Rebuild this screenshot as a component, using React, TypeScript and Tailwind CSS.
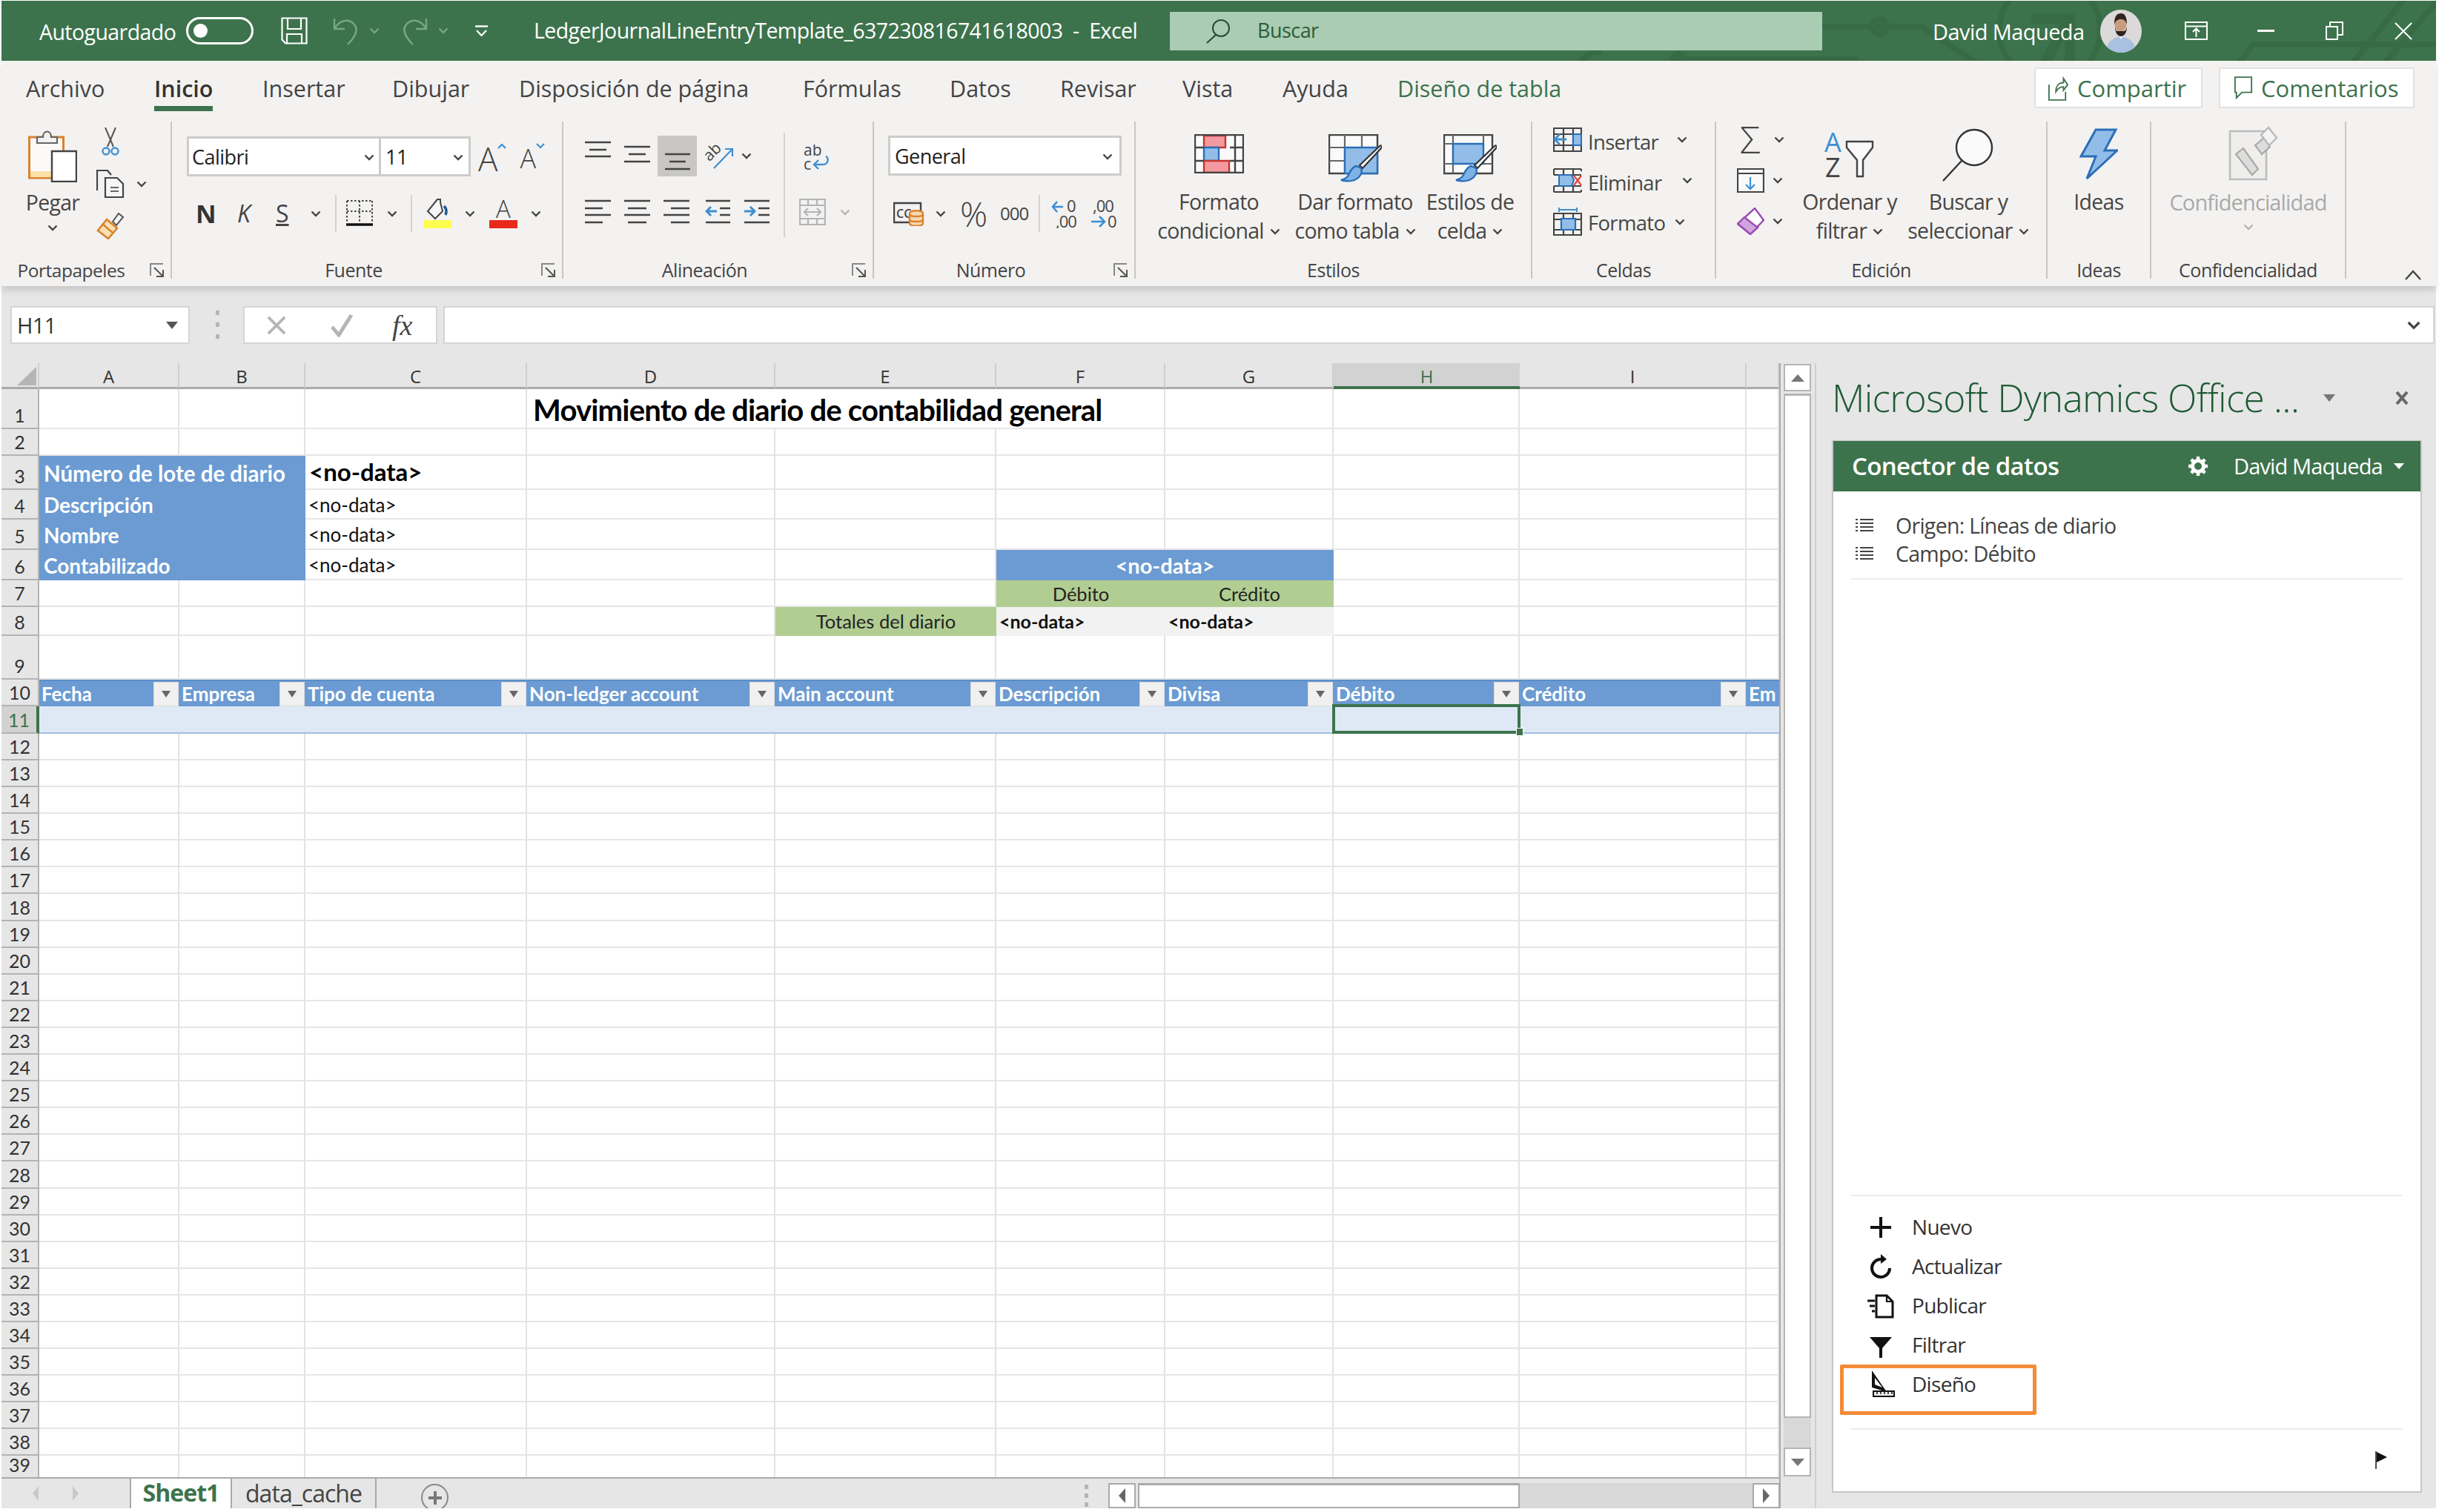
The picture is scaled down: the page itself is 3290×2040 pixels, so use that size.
import React from "react";

const Chev = ({ c = "#444", cls = "" }: { c?: string; cls?: string }) => (
  <svg viewBox="0 0 14 9" className={"w-[14px] h-[9px] shrink-0 " + cls}>
    <path d="M1.5 1.5 7 7l5.5-5.5" fill="none" stroke={c} strokeWidth="2.4" />
  </svg>
);
const Sep = ({ cls }: { cls: string }) => <div className={"w-[2px] bg-[#d4d3d2] shrink-0 " + cls} />;

/* ---------- title bar ---------- */
function TitleBar() {
  return (
    <div className="relative h-[81px] bg-[#3d734c] flex items-center pl-[51px] text-white overflow-hidden shrink-0">
      <svg viewBox="0 0 3284 81" className="absolute inset-0 w-full h-full">
        <g fill="none" stroke="#376b46" strokeWidth="8">
          <path d="M2455 35h80m0 0h55l76 50" />
          <circle cx="2533" cy="35" r="10" />
          <circle cx="2763" cy="40" r="68" />
          <path d="M2738 24h52v62M2790 24l-34 60" strokeWidth="14" />
          <path d="M3017 85l20-26h250M3243-5l-72 90M3290-5l-76 90" />
          <path d="M2250 79h255" />
          <circle cx="2262" cy="80" r="8" />
          <path d="M2130 85c5-14 18-16 28-16" />
        </g>
      </svg>
      <div className="relative flex items-center">
        <span className="w-[198px] text-[28.5px] tracking-[-0.02em] whitespace-nowrap mt-[3px]">Autoguardado</span>
        <div className="w-[91px] h-[37px] border-[3px] border-white rounded-full flex items-center pl-[7px]">
          <div className="w-[19px] h-[19px] rounded-full bg-white" />
        </div>
        <svg viewBox="0 0 36 37" className="w-[36px] h-[37px] ml-[37px]">
          <path d="M1.5 1.5h33v34H6l-4.500-5z" fill="none" stroke="#fff" strokeWidth="2.2" />
          <path d="M9 2v14h18V2M8 35V23h20v12" fill="none" stroke="#fff" strokeWidth="2.2" />
        </svg>
        <svg viewBox="0 0 35 40" className="w-[35px] h-[40px] ml-[34px]">
          <path d="M2 3v14h14M2 17C8 6 20 2 28 10c8 8 2 18-8 28" fill="none" stroke="#78a586" strokeWidth="2.4" />
        </svg>
        <Chev c="#78a586" cls="ml-[14px]" />
        <svg viewBox="0 0 37 40" className="w-[37px] h-[40px] ml-[29px]">
          <path d="M34 3v14H20M34 17C28 6 16 2 8 10c-8 8-2 18 8 28" fill="none" stroke="#78a586" strokeWidth="2.4" />
        </svg>
        <Chev c="#78a586" cls="ml-[13px]" />
        <svg viewBox="0 0 17 15" className="w-[17px] h-[15px] ml-[36px]">
          <path d="M0 1.500h17" stroke="#fff" strokeWidth="2.4" />
          <path d="M2 7l6.500 7L15 7" fill="none" stroke="#fff" strokeWidth="2.2" />
        </svg>
        <span className="w-[858px] ml-[62px] text-[28.5px] tracking-[-0.02em] whitespace-pre">LedgerJournalLineEntryTemplate_637230816741618003  -  Excel</span>
        <div className="w-[880px] h-[52px] bg-[#a9ccb3] flex items-center pl-[48px]">
          <svg viewBox="0 0 34 34" className="w-[34px] h-[34px]">
            <circle cx="21" cy="13" r="11" fill="none" stroke="#264d33" strokeWidth="2" />
            <path d="M14 22 2 33" stroke="#264d33" strokeWidth="2.2" />
          </svg>
          <span className="ml-[36px] text-[27px] tracking-[-0.02em] text-[#2b5c3a]">Buscar</span>
        </div>
        <span className="w-[226px] ml-[149px] text-[29px] tracking-[-0.02em] whitespace-nowrap mt-[3px]">David Maqueda</span>
        <svg viewBox="0 0 56 58" className="w-[56px] h-[58px]">
          <defs>
            <clipPath id="av"><ellipse cx="28" cy="29" rx="28" ry="29" /></clipPath>
          </defs>
          <g clipPath="url(#av)">
            <rect width="56" height="58" fill="#dcdad8" />
            <path d="M8 58c0-14 8-20 20-22 12 2 20 8 20 22z" fill="#a9c0e0" />
            <path d="M24 34l4 6 4-6z" fill="#eef2f8" />
            <ellipse cx="27.500" cy="20" rx="8" ry="10" fill="#c99c80" />
            <path d="M19 20c0-12 4-15 9-15s8 4 8 15c-2-5-3-7-8-7s-7 2-9 7zM20 23c1 5 2 6 3 6h9c1 0 3-1 4-6 0 7-3 13-8 13s-8-6-8-13z" fill="#2f241f" />
          </g>
        </svg>
        <svg viewBox="0 0 31 25" className="w-[31px] h-[25px] ml-[58px]">
          <path d="M1 1h29v23H1zM1 6.500h29M15.500 21V10M11 14l4.500-4.500L20 14" fill="none" stroke="#fff" strokeWidth="2" />
        </svg>
        <div className="w-[23px] h-[3px] bg-white ml-[67px]" />
        <svg viewBox="0 0 25 25" className="w-[25px] h-[25px] ml-[69px]">
          <path d="M1 7h15v17H1zM6 7V1h17v17h-7" fill="none" stroke="#fff" strokeWidth="2" />
        </svg>
        <svg viewBox="0 0 24 24" className="w-[24px] h-[24px] ml-[68px]">
          <path d="M1 1l22 22M23 1 1 23" stroke="#fff" strokeWidth="2" />
        </svg>
      </div>
    </div>
  );
}

/* ---------- ribbon ---------- */
const TABS: [string, string][] = [
  ["Archivo", "w-[173px]"],
  ["Inicio", "w-[146px]"],
  ["Insertar", "w-[175px]"],
  ["Dibujar", "w-[171px]"],
  ["Disposición de página", "w-[383px]"],
  ["Fórmulas", "w-[198px]"],
  ["Datos", "w-[149px]"],
  ["Revisar", "w-[165px]"],
  ["Vista", "w-[135px]"],
  ["Ayuda", "w-[155px]"],
];

function Tabs() {
  return (
    <div className="flex items-start h-[82px] pl-[33px] pt-[9px] text-[30.5px] text-[#444]">
      {TABS.map(([t, w]) => (
        <div key={t} className={w + " mt-[5px]"}>
          <div className={"h-[54px] leading-[46px] whitespace-nowrap w-fit box-border " + (t === "Inicio" ? "border-b-[7px] border-[#3d734c] font-semibold text-[#333]" : "")}>{t}</div>
        </div>
      ))}
      <div className="mt-[5px] leading-[46px] text-[#3d734c] whitespace-nowrap">Diseño de tabla</div>
      <div className="ml-auto mr-[29px] flex gap-[22px] text-[31px] text-[#3d734c] font-medium">
        <div className="w-[227px] h-[55px] bg-white border-2 border-[#e2e1e0] rounded-[3px] flex items-center pl-[16px] gap-[12px]">
          <svg viewBox="0 0 30 38" className="w-[28px] h-[36px]">
            <path d="M2 14v22h24V24M12 24c0-8 4-13 11-13V5l6 9-6 8v-5c-5 0-8 2-11 7z" fill="none" stroke="#3d734c" strokeWidth="2" />
          </svg>
          <span className="whitespace-nowrap leading-[46px]">Compartir</span>
        </div>
        <div className="w-[264px] h-[55px] bg-white border-2 border-[#e2e1e0] rounded-[3px] flex items-center pl-[18px] gap-[11px]">
          <svg viewBox="0 0 28 36" className="w-[26px] h-[34px]">
            <path d="M2 2h24v22H12l-8 8v-8H2z" fill="none" stroke="#3d734c" strokeWidth="2" />
          </svg>
          <span className="whitespace-nowrap leading-[46px]">Comentarios</span>
        </div>
      </div>
    </div>
  );
}

const Launcher = () => (
  <svg viewBox="0 0 20 20" className="w-[20px] h-[20px] shrink-0 mr-[8px]">
    <path d="M1 17V1h17" fill="none" stroke="#888" strokeWidth="2" />
    <path d="M6 6l11 11M18 9v9H9" fill="none" stroke="#555" strokeWidth="2" />
  </svg>
);

function Group({ w, label, launcher, children, labelCls = "" }: { w: string; label?: string; launcher?: boolean; children: React.ReactNode; labelCls?: string }) {
  return (
    <div className={"flex flex-col h-[212px] shrink-0 border-r-2 border-[#c8c7c6] " + w}>
      <div className="h-[188px] relative">{children}</div>
      <div className="h-[24px] flex items-center pt-[2px] text-[25px] tracking-[-0.02em] text-[#444]">
        <span className={"flex-1 text-center whitespace-nowrap " + labelCls}>{label}</span>
        {launcher && <Launcher />}
      </div>
    </div>
  );
}

function BigBtn({ w, icon, lines, gray, pad = "pt-[17px]" }: { w: string; icon: React.ReactNode; lines: [string, string?]; gray?: boolean; pad?: string }) {
  const col = gray ? "#a9a9a9" : "#444";
  return (
    <div className={"shrink-0 flex flex-col items-center text-[28.5px] leading-[39px] tracking-[-0.025em] whitespace-nowrap " + w + (gray ? " text-[#a9a9a9]" : " text-[#484644]")}>
      <div className={"h-[89px] " + pad}>{icon}</div>
      <div>{lines[0]}</div>
      <div className="flex items-center gap-[8px]">
        {lines[1]}
        {lines[1] !== undefined && <Chev c={col} cls="w-[11px] h-[8px] mt-[2px]" />}
      </div>
    </div>
  );
}

const L = ({ d, x = 36, y = 40 }: { d: string; x?: number; y?: number }) => (
  <svg viewBox={`0 0 ${x} ${y}`} style={{ width: x, height: y }} className="shrink-0">
    <path d={d} fill="none" stroke="#444" strokeWidth="2.4" />
  </svg>
);

const PickBox = ({ w, text, cls }: { w: string; text: string; cls: string }) => (
  <div className={"h-[54px] bg-white border-[3px] border-[#cdcccb] flex items-center justify-between pt-[3px] text-[27px] text-[#222] tracking-[-0.02em] " + w + " " + cls}>
    <span>{text}</span>
    <Chev />
  </div>
);

function Ribbon() {
  return (
    <div className="relative z-10 h-[304px] bg-[#f3f2f1] shadow-[0_5px_9px_rgba(0,0,0,0.14)] shrink-0">
      <Tabs />
      <div className="flex">
        {/* Portapapeles */}
        <Group w="w-[230px]" label="Portapapeles" launcher labelCls="pr-[12px] text-[24.5px]">
          <div className="flex h-full">
            <div className="w-[128px] flex flex-col items-center pt-[9px] pl-[10px] text-[28.5px] leading-[39px] tracking-[-0.025em] text-[#484644]">
              <svg viewBox="0 0 66 73" className="w-[66px] h-[73px] mb-[8px]">
                <path d="M1.500 12h46v55h-46z" fill="#fbfaf8" stroke="#d9822b" strokeWidth="3" />
                <path d="M3 58h30v8H3z" fill="#fbe0a8" />
                <path d="M12 20v-8h8c0-10 11-10 11 0h8v8z" fill="#f3f2f1" stroke="#666" strokeWidth="2.2" />
                <path d="M32 31h33v41H32z" fill="#fff" stroke="#444" strokeWidth="2.4" />
              </svg>
              <span>Pegar</span>
              <Chev cls="mt-[10px]" />
            </div>
            <div className="flex flex-col pt-[8px]">
              <svg viewBox="0 0 24 38" className="w-[24px] h-[38px] ml-[7px]">
                <path d="M5 0l11 26M19 0 8 26" stroke="#555" strokeWidth="2" fill="none" />
                <circle cx="6" cy="32" r="4.500" fill="none" stroke="#3f8fd2" strokeWidth="2.4" />
                <circle cx="18" cy="32" r="4.500" fill="none" stroke="#3f8fd2" strokeWidth="2.4" />
              </svg>
              <div className="flex items-center mt-[19px]">
                <svg viewBox="0 0 38 38" className="w-[38px] h-[38px]">
                  <path d="M1 28V1h14l5 6" fill="none" stroke="#444" strokeWidth="2.2" />
                  <path d="M12 11h16l8 8v18H12z" fill="#f7f7f7" stroke="#444" strokeWidth="2.2" />
                  <path d="M19 24h11M19 29h11" stroke="#666" strokeWidth="2" />
                </svg>
                <Chev cls="ml-[16px]" />
              </div>
              <svg viewBox="0 0 38 36" className="w-[38px] h-[36px] mt-[20px]">
                <path d="M22 12 30 1l6 5-9 11z" fill="#f6f6f6" stroke="#555" strokeWidth="2" />
                <path d="M14 9l14 12-12 14L2 24z" fill="#f8dfb6" stroke="#d9822b" strokeWidth="2.6" />
                <path d="M8 15l14 12" stroke="#d9822b" strokeWidth="2.4" />
              </svg>
            </div>
          </div>
        </Group>
        {/* Fuente */}
        <Group w="w-[528px]" label="Fuente" launcher labelCls="pr-[8px]">
          <div className="pt-[20px] pl-[20px]">
            <div className="flex items-center">
              <PickBox w="w-[262px]" text="Calibri" cls="pl-[4px] pr-[6px]" />
              <PickBox w="w-[121px] border-l-0" text="11" cls="pl-[6px] pr-[7px]" />
              <span className="text-[44px] leading-[60px] h-[54px] text-[#444] ml-[10px] font-light">A</span>
              <svg viewBox="0 0 12 8" className="w-[12px] h-[8px] -mt-[28px]"><path d="M1 7l5-5 5 5" fill="none" stroke="#3f8fd2" strokeWidth="2.2" /></svg>
              <span className="text-[36px] leading-[60px] h-[54px] text-[#444] ml-[18px] font-light">A</span>
              <svg viewBox="0 0 12 8" className="w-[12px] h-[8px] -mt-[28px]"><path d="M1 1l5 5 5-5" fill="none" stroke="#3f8fd2" strokeWidth="2.2" /></svg>
            </div>
            <div className="flex items-center h-[50px] mt-[25px] text-[#444]">
              <span className="w-[56px] pl-[12px] text-[34px] font-bold leading-none text-[#333]">N</span>
              <span className="w-[54px] pl-[12px] text-[32px] italic leading-none">K</span>
              <span className="w-[57px] pl-[10px] text-[32px] underline leading-none">S</span>
              <Chev />
              <Sep cls="h-[50px] ml-[19px]" />
              <svg viewBox="0 0 36 36" className="w-[36px] h-[36px] ml-[13px]">
                <path d="M1 1h34M1 1v28M35 1v28M18 1v28M1 15h34" stroke="#444" strokeWidth="2" strokeDasharray="2.500 2.500" fill="none" />
                <path d="M0 33h36" stroke="#111" strokeWidth="3.500" />
              </svg>
              <Chev cls="ml-[19px]" />
              <Sep cls="h-[50px] ml-[18px]" />
              <svg viewBox="0 0 38 40" className="w-[38px] h-[40px] ml-[15px]">
                <path d="M19 1l-13 16 10 10 10-10-3-12V1z" fill="#f6f6f6" stroke="#444" strokeWidth="2" />
                <path d="M28 10c3 3 4 7 2 12" stroke="#1d5a94" strokeWidth="3.500" fill="none" />
                <rect y="29" width="38" height="11" fill="#fdfd50" />
              </svg>
              <Chev cls="ml-[18px]" />
              <div className="relative w-[38px] h-[40px] ml-[19px]">
                <div className="text-center text-[33px] leading-[28px] font-light text-[#444]">A</div>
                <div className="absolute bottom-0 left-0 right-0 h-[11px] bg-[#e8291c]" />
              </div>
              <Chev cls="ml-[18px]" />
            </div>
          </div>
        </Group>
        {/* Alineacion */}
        <Group w="w-[419px]" label="Alineación" launcher labelCls="pr-[8px]">
          <div className="flex items-start pt-[19px] pl-[29px]">
            <div>
              <div className="flex items-center h-[55px]">
                <L x={36} y={55} d="M0 9h35M6 19h23M0 28h35" />
                <L x={17} y={55} d="" />
                <L x={36} y={55} d="M0 15h35M6 25h23M0 35h35" />
                <div className="w-[53px] h-[55px] bg-[#c8c7c5] ml-[9px] shrink-0 flex justify-center">
                  <L x={36} y={55} d="M1 25h34M7 35h22M1 45h34" />
                </div>
                <svg viewBox="0 0 40 36" className="w-[40px] h-[36px] ml-[10px] -mt-[2px]">
                  <text x="1" y="20" transform="rotate(-45 12 16)" fontSize="21" fontFamily="Open Sans" fill="#444">ab</text>
                  <path d="M13 35l24-25M28 9h10v10" fill="none" stroke="#3f8fd2" strokeWidth="2.2" />
                </svg>
                <Chev cls="ml-[10px]" />
              </div>
              <div className="flex items-center h-[40px] mt-[27px]">
                <L d="M0 6h35M0 16h24M0 25h35M0 35h24" />
                <L x={17} y={40} d="" />
                <L d="M0 6h35M5 16h25M0 25h35M5 35h25" />
                <L x={17} y={40} d="" />
                <L d="M0 6h35M10 16h25M0 25h35M10 35h25" />
                <div className="w-[20px]" />
                <svg viewBox="0 0 36 40" className="w-[36px] h-[40px]">
                  <path d="M1 6h33M20 16h14M20 25h14M1 35h33" fill="none" stroke="#444" strokeWidth="2.4" />
                  <path d="M16 20H2M8 14l-6 6 6 6" fill="none" stroke="#3f8fd2" strokeWidth="3" />
                </svg>
                <div className="w-[16px]" />
                <svg viewBox="0 0 36 40" className="w-[36px] h-[40px]">
                  <path d="M1 6h34M20 16h15M20 25h15M1 35h34" fill="none" stroke="#444" strokeWidth="2.4" />
                  <path d="M1 20h14M9 14l6 6-6 6" fill="none" stroke="#3f8fd2" strokeWidth="3" />
                </svg>
              </div>
            </div>
            <Sep cls="h-[141px] ml-[18px] -mt-[4px]" />
            <div className="ml-[19px]">
              <svg viewBox="0 0 34 36" className="w-[34px] h-[36px] ml-[6px] mt-[12px]">
                <text x="0" y="15" fontSize="21" fontFamily="Open Sans" fill="#444">ab</text>
                <text x="0" y="34" fontSize="21" fontFamily="Open Sans" fill="#444">c</text>
                <path d="M14 27h12c8 0 8-10 4-11M20 21l-6 6 6 6" fill="none" stroke="#3f8fd2" strokeWidth="2.4" />
              </svg>
              <div className="flex items-center mt-[37px]">
                <svg viewBox="0 0 36 36" className="w-[36px] h-[36px]">
                  <path d="M1 1h34v34H1zM1 9h34M1 27h34M12 1v8M24 1v8M12 27v8M24 27v8M7 18h22M12 13l-5 5 5 5M24 13l5 5-5 5" fill="none" stroke="#b4b4b4" strokeWidth="2.200" />
                </svg>
                <Chev c="#b4b4b4" cls="ml-[19px]" />
              </div>
            </div>
          </div>
        </Group>
        {/* Numero */}
        <Group w="w-[353px]" label="Número" launcher labelCls="pr-[8px]">
          <div className="pt-[19px] pl-[19px]">
            <PickBox w="w-[315px]" text="General" cls="pl-[6px] pr-[9px]" />
            <div className="flex items-center h-[50px] mt-[26px] text-[#444]">
              <svg viewBox="0 0 42 34" className="w-[42px] h-[34px] ml-[7px]">
                <path d="M1 3h36v26H1z" fill="none" stroke="#444" strokeWidth="2.400" />
                <text x="4" y="23" fontSize="16" fontWeight="600" fontFamily="Open Sans" fill="#444">CC</text>
                <path d="M22 17c0-5 18-5 18 0v13c0 5-18 5-18 0z" fill="#f6d9b0" stroke="#d9822b" strokeWidth="2.400" />
                <path d="M22 18c0 4 18 4 18 0M22 25c0 4 18 4 18 0" fill="none" stroke="#d9822b" strokeWidth="2.400" />
              </svg>
              <Chev cls="ml-[15px]" />
              <span className="ml-[19px] w-[54px] text-[46px] leading-none font-light">%</span>
              <span className="w-[52px] text-[24px] leading-none tracking-[-0.04em]">000</span>
              <Sep cls="h-[50px]" />
              <svg viewBox="0 0 37 40" className="w-[37px] h-[40px] ml-[15px]">
                <path d="M16 11H2M8 4 2 11l6 7" fill="none" stroke="#3f8fd2" strokeWidth="2.600" />
                <text x="21" y="18" fontSize="22" fontFamily="Open Sans" fill="#444">0</text>
                <text x="6" y="39" fontSize="22" fontFamily="Open Sans" fill="#444" letterSpacing="-1">,00</text>
              </svg>
              <svg viewBox="0 0 38 40" className="w-[38px] h-[40px] ml-[15px]">
                <text x="4" y="18" fontSize="22" fontFamily="Open Sans" fill="#444" letterSpacing="-1">,00</text>
                <path d="M2 31h18M13 24l7 7-7 7" fill="none" stroke="#3f8fd2" strokeWidth="2.600" />
                <text x="24" y="39" fontSize="22" fontFamily="Open Sans" fill="#444">0</text>
              </svg>
            </div>
          </div>
        </Group>
        {/* Estilos */}
        <Group w="w-[535px]" label="Estilos">
          <div className="flex pl-[20px]">
            <BigBtn w="w-[184px]" lines={["Formato", "condicional"]} icon={
              <svg viewBox="0 0 67 53" className="w-[67px] h-[53px]">
                <path d="M1 1h65v51H1z" fill="#fafafa" />
                <path d="M13 2h29v16H13z" fill="#f29aa0" stroke="#c8362c" strokeWidth="2.400" />
                <path d="M13 18h20v18H13z" fill="#92bde8" stroke="#2a6fb8" strokeWidth="2.400" />
                <path d="M13 36h34v16H13z" fill="#f29aa0" stroke="#c8362c" strokeWidth="2.400" />
                <path d="M1 1h65v51H1zM1 18h12M1 36h12M48 18h18M48 36h18M55 1v51" fill="none" stroke="#444" strokeWidth="2.400" />
              </svg>} />
            <BigBtn w="w-[184px]" lines={["Dar formato", "como tabla"]} icon={
              <svg viewBox="0 0 72 65" className="w-[72px] h-[65px]">
                <path d="M1 1h65v52H1z" fill="#fafafa" stroke="#444" strokeWidth="2.400" />
                <path d="M22 1v52M45 1v17M1 18h65M1 36h21" fill="none" stroke="#666" strokeWidth="2.200" />
                <path d="M22 18h44v35H22z" fill="#92bde8" stroke="#2a6fb8" strokeWidth="2.400" />
                <path d="M42 42 68 17c3-3 5-1 3 2L46 46z" fill="#f6f6f6" stroke="#333" strokeWidth="2.200" />
                <path d="M17 62c8 2 18 2 24-4 4-4 5-10 2-13l-6-2c-6 2-8 8-10 12-2 4-6 6-10 7z" fill="#7eb2e4" stroke="#2a6fb8" strokeWidth="2.400" />
              </svg>} />
            <BigBtn w="w-[126px]" lines={["Estilos de", "celda"]} icon={
              <svg viewBox="0 0 72 65" className="w-[72px] h-[65px]">
                <path d="M1 1h65v52H1z" fill="#fafafa" stroke="#444" strokeWidth="2.400" />
                <path d="M13 1v52M54 1v12M54 40h12M1 13h12M1 40h12" fill="none" stroke="#666" strokeWidth="2.200" />
                <path d="M13 13h41v27H13z" fill="#92bde8" stroke="#2a6fb8" strokeWidth="2.400" />
                <path d="M42 42 68 17c3-3 5-1 3 2L46 46z" fill="#f6f6f6" stroke="#333" strokeWidth="2.200" />
                <path d="M17 62c8 2 18 2 24-4 4-4 5-10 2-13l-6-2c-6 2-8 8-10 12-2 4-6 6-10 7z" fill="#7eb2e4" stroke="#2a6fb8" strokeWidth="2.400" />
              </svg>} />
          </div>
        </Group>
        {/* Celdas */}
        <Group w="w-[248px]" label="Celdas">
          <div className="flex flex-col pt-[8px] pl-[28px] text-[27.5px] tracking-[-0.025em] text-[#484644]">
            <div className="flex items-center h-[33px]">
              <svg viewBox="0 0 39 33" className="w-[39px] h-[33px]">
                <path d="M1 1h37v31H1zM1 9h37M1 24h37M14 1v31M27 1v31" fill="none" stroke="#444" strokeWidth="2.200" />
                <path d="M27 9h11v15H27z" fill="#92bde8" stroke="#2a6fb8" strokeWidth="2" />
                <path d="M18 16H3M9 9l-7 7 7 7" fill="none" stroke="#3f8fd2" strokeWidth="2.800" />
              </svg>
              <span className="ml-[8px] w-[120px] mt-[6px] leading-none whitespace-nowrap">Insertar</span>
              <Chev />
            </div>
            <div className="flex items-center h-[33px] mt-[22px]">
              <svg viewBox="0 0 39 33" className="w-[39px] h-[33px]">
                <path d="M1 1h37M1 9h37M1 24h37M1 32h37M1 1v8M1 24v8M14 1v8M14 24v8M27 1v8M27 24v8M38 1v3M38 29v3" fill="none" stroke="#444" strokeWidth="2.200" />
                <path d="M8 9h17l3 7-3 8H8z" fill="#92bde8" stroke="#2a6fb8" strokeWidth="2" />
                <path d="M28 10l10 13M38 10 28 23" stroke="#e34b43" strokeWidth="2.400" />
              </svg>
              <span className="ml-[8px] w-[127px] mt-[6px] leading-none whitespace-nowrap">Eliminar</span>
              <Chev />
            </div>
            <div className="flex items-center h-[38px] mt-[20px]">
              <svg viewBox="0 0 39 38" className="w-[39px] h-[38px]">
                <path d="M1 8h37v29H1zM1 16h37M1 30h37M14 8v29M27 8v29" fill="none" stroke="#444" strokeWidth="2.200" />
                <path d="M11 15h19v15H11z" fill="#92bde8" stroke="#2a6fb8" strokeWidth="2.200" />
                <path d="M8 3h24M8 0v6M32 0v6" fill="none" stroke="#3f8fd2" strokeWidth="2" />
              </svg>
              <span className="ml-[8px] w-[117px] mt-[4px] leading-none whitespace-nowrap">Formato</span>
              <Chev />
            </div>
          </div>
        </Group>
        {/* Edicion */}
        <Group w="w-[447px]" label="Edición">
          <div className="flex">
            <div className="w-[108px] pl-[28px] pt-[8px] flex flex-col">
              <div className="flex items-center h-[33px]">
                <span className="w-[30px] ml-[4px] text-[50px] leading-[33px] text-[#444] font-light">Σ</span>
                <Chev cls="ml-[16px]" />
              </div>
              <div className="flex items-center h-[33px] mt-[22px]">
                <svg viewBox="0 0 37 33" className="w-[37px] h-[33px]">
                  <path d="M1 1h35v31H1zM1 7h35" fill="#fafafa" stroke="#444" strokeWidth="2.200" />
                  <path d="M18 12v16M12 22l6 6 6-6" fill="none" stroke="#3f8fd2" strokeWidth="2.200" />
                </svg>
                <Chev cls="ml-[11px]" />
              </div>
              <div className="flex items-center h-[37px] mt-[20px]">
                <svg viewBox="0 0 37 37" className="w-[37px] h-[37px]">
                  <path d="M24 1 36 17 18 36 1 22z" fill="#fff" stroke="#9a4bb4" strokeWidth="2.400" />
                  <path d="M1 22l9-9 18 14-10 9z" fill="#d0a4dc" stroke="#9a4bb4" strokeWidth="2.400" />
                </svg>
                <Chev cls="ml-[11px]" />
              </div>
            </div>
            <BigBtn w="w-[144px]" pad="pt-[11px]" lines={["Ordenar y", "filtrar"]} icon={
              <svg viewBox="0 0 68 66" className="w-[68px] h-[66px]">
                <text x="0" y="30" fontSize="36" fontFamily="Open Sans" fill="#3f8fd2">A</text>
                <text x="1" y="64" fontSize="36" fontFamily="Open Sans" fill="#444">Z</text>
                <path d="M30 16h35v8L52 41v22h-8V41L30 24z" fill="#fafafa" stroke="#444" strokeWidth="2.400" />
              </svg>} />
            <BigBtn w="w-[176px]" pad="pt-[9px]" lines={["Buscar y", "seleccionar"]} icon={
              <svg viewBox="0 0 72 72" className="w-[72px] h-[72px]">
                <circle cx="44" cy="26" r="24" fill="#fafafa" stroke="#333" strokeWidth="2.400" />
                <path d="M27 44 2 71" stroke="#333" strokeWidth="2.400" />
              </svg>} />
          </div>
        </Group>
        <Group w="w-[140px]" label="Ideas">
          <BigBtn w="w-full" pad="pt-[9px]" lines={["Ideas"]} icon={
            <svg viewBox="0 0 52 70" className="w-[52px] h-[70px]">
              <path d="M22 2h27L34 30h17L10 68l12-30H2z" fill="#92bde8" stroke="#2a6fb8" strokeWidth="3" />
            </svg>} />
        </Group>
        <Group w="w-[263px]" label="Confidencialidad">
          <div className="flex flex-col items-center text-[29px] tracking-[-0.03em] leading-[39px] text-[#a9a9a9] whitespace-nowrap">
            <div className="h-[89px] pt-[6px] pl-[12px]">
              <svg viewBox="0 0 66 74" className="w-[66px] h-[74px]">
                <path d="M2 7h49v65H2z" fill="#efeeed" stroke="#bdbdbd" strokeWidth="2.600" />
                <path d="M10 38l10-8 20 28-8 8zM36 26l12-10 8 12-11 10z" fill="#dedddc" stroke="#a9a9a9" strokeWidth="2.200" />
                <path d="M44 12l10-10 11 14-10 10z" fill="#f4f4f4" stroke="#b8b8b8" strokeWidth="2.200" />
              </svg>
            </div>
            <div>Confidencialidad</div>
            <Chev c="#b4b4b4" cls="mt-[10px]" />
          </div>
        </Group>
        <div className="flex-1">
          <svg viewBox="0 0 24 14" className="w-[24px] h-[14px] ml-[78px] mt-[200px]">
            <path d="M2 13 12 2l10 11" fill="none" stroke="#444" strokeWidth="2.400" />
          </svg>
        </div>
      </div>
    </div>
  );
}

/* ---------- formula bar ---------- */
function FormulaBar() {
  return (
    <div className="h-[104px] pt-[27px] pl-[12px] pr-[2px] flex items-start shrink-0 bg-[#e6e6e6]">
      <div className="w-[242px] h-[51px] bg-white border-2 border-[#d4d4d4] flex items-center justify-between pl-[7px] pr-[14px] text-[29px] text-[#333] tracking-[-0.02em]">
        <span>H11</span>
        <div className="w-0 h-0 border-x-[8px] border-x-transparent border-t-[10px] border-t-[#555]" />
      </div>
      <div className="ml-[35px] w-[5px] h-[38px] mt-[6px] flex flex-col justify-between">
        <div className="h-[6px] bg-[#b5b5b5]" /><div className="h-[6px] bg-[#b5b5b5]" /><div className="h-[6px] bg-[#b5b5b5]" />
      </div>
      <div className="ml-[32px] w-[262px] h-[51px] bg-white border-2 border-[#d4d4d4] flex items-center pl-[30px]">
        <svg viewBox="0 0 28 28" className="w-[26px] h-[26px]"><path d="M2 2l24 24M26 2 2 26" stroke="#b5b5b5" strokeWidth="4" /></svg>
        <svg viewBox="0 0 32 32" className="w-[32px] h-[32px] ml-[59px]"><path d="M3 18l9 11L29 2" fill="none" stroke="#b5b5b5" strokeWidth="5" /></svg>
        <span className="ml-[52px] text-[38px] italic text-[#444] font-['Liberation_Serif',serif] leading-[44px]">fx</span>
      </div>
      <div className="ml-[8px] flex-1 h-[51px] bg-white border-2 border-[#d4d4d4] flex items-center justify-end pr-[16px]">
        <Chev cls="w-[20px] h-[12px]" />
      </div>
    </div>
  );
}

/* ---------- sheet ---------- */
const COLS: [string, string][] = [
  ["A", "w-[189px]"], ["B", "w-[170px]"], ["C", "w-[299px]"], ["D", "w-[335px]"], ["E", "w-[298px]"],
  ["F", "w-[228px]"], ["G", "w-[227px]"], ["H", "w-[251px]"], ["I", "w-[306px]"], ["J", "w-[44px]"],
];
const ROW_H: string[] = [
  "h-[54px]", "h-[36px]", "h-[46px]", "h-[40px]", "h-[41px]", "h-[41px]", "h-[36px]", "h-[39px]", "h-[59px]", "h-[36px]", "h-[37px]", "h-[36px]",
  ...Array(26).fill("h-[36.1px]"),
  "h-[31px]",
];

type Cell = { text?: string; span?: number; width?: string; cls?: string; plain?: boolean };
const BLUE = "bg-[#6b9bd2] text-white font-bold pl-[6px]";
const GRN = "bg-[#b1cd92] text-[#222] justify-center text-[25.5px]";
const NOD = "pl-[4px] pt-[2px] text-[#111] text-[26px]";
const SPECIAL: Record<string, Cell> = {
  D1: { text: "Movimiento de diario de contabilidad general", span: 3, width: "w-[861px]", cls: "pl-[8px] pt-[3px] text-[40px] font-bold text-black tracking-[-0.02em]" },
  A3: { text: "Número de lote de diario", span: 2, width: "w-[359px]", plain: true, cls: BLUE + " pt-[2px] text-[29.5px]" },
  A4: { text: "Descripción", span: 2, width: "w-[359px]", plain: true, cls: BLUE + " text-[28px]" },
  A5: { text: "Nombre", span: 2, width: "w-[359px]", plain: true, cls: BLUE + " text-[28px]" },
  A6: { text: "Contabilizado", span: 2, width: "w-[359px]", plain: true, cls: BLUE + " text-[28px]" },
  C3: { text: "<no-data>", cls: "pl-[5px] text-[33px] font-bold text-black" },
  C4: { text: "<no-data>", cls: NOD },
  C5: { text: "<no-data>", cls: NOD },
  C6: { text: "<no-data>", cls: NOD },
  F6: { text: "<no-data>", span: 2, width: "w-[455px]", plain: true, cls: "bg-[#6b9bd2] text-white font-bold justify-center text-[29px]" },
  F7: { text: "Débito", plain: true, cls: GRN },
  G7: { text: "Crédito", plain: true, cls: GRN },
  E8: { text: "Totales del diario", plain: true, cls: GRN },
  F8: { text: "<no-data>", plain: true, cls: "bg-[#f2f2f2] text-[#111] font-bold pl-[4px] text-[25px]" },
  G8: { text: "<no-data>", plain: true, cls: "bg-[#f2f2f2] text-[#111] font-bold pl-[4px] text-[25px]" },
};
const HEAD: Record<string, string> = {
  A: "Fecha", B: "Empresa", C: "Tipo de cuenta", D: "Non-ledger account", E: "Main account", F: "Descripción", G: "Divisa", H: "Débito", I: "Crédito", J: "Em",
};

function HeadCell({ text, w, last }: { text: string; w: string; last: boolean }) {
  return (
    <div className={w + " shrink-0 h-full bg-[#6b9bd2] border-t-2 border-[#5d8fc9] flex items-center justify-between pl-[3px] pr-px text-white font-bold text-[26px] overflow-hidden"}>
      <span className="whitespace-nowrap">{text}</span>
      {!last && (
        <div className="w-[34px] h-[33px] bg-[#f0f0f0] border border-[#dcdcdc] flex items-center justify-center shrink-0">
          <div className="w-0 h-0 border-x-[6px] border-x-transparent border-t-[9px] border-t-[#666]" />
        </div>
      )}
    </div>
  );
}

function Row({ n }: { n: number }) {
  const h = ROW_H[n - 1];
  const sel = n === 11;
  const cells: React.ReactNode[] = [];
  let skip = 0;
  COLS.forEach(([c, w]) => {
    if (skip > 0) { skip--; return; }
    const key = c + n;
    if (n === 10) {
      cells.push(<HeadCell key={key} text={HEAD[c]} w={w} last={c === "J"} />);
      return;
    }
    if (sel) {
      cells.push(
        <div key={key} className={w + " shrink-0 h-full bg-[#dfe9f5] border-b-2 border-[#a3bee3] relative"}>
          {c === "H" && (
            <div className="absolute -left-[2px] -top-[3px] -right-px -bottom-[2px] border-[4px] border-[#3d734c] z-10">
              <div className="absolute -right-[8px] -bottom-[7px] w-[10px] h-[11px] bg-[#3d734c] border border-white" />
            </div>
          )}
        </div>
      );
      return;
    }
    const s = SPECIAL[key];
    if (s?.span) skip = s.span - 1;
    const width = s?.width ?? w;
    const lines = s?.plain ? "" : "border-r-2 border-b-2 border-r-[#e3e3e3] border-b-[#e6e6e6] ";
    cells.push(
      <div key={key} className={width + " shrink-0 h-full flex items-center whitespace-nowrap " + lines + (s?.cls ?? "")}>
        {s?.text}
      </div>
    );
  });
  return (
    <div className={"flex " + h}>
      <div className={"w-[51px] shrink-0 h-full flex items-end justify-center pb-[2px] text-[25px] leading-[30px] border-b-2 border-r-2 " +
        (sel ? "bg-[#d2d2d2] text-[#3d734c] border-b-[#b0b0b0] border-r-[4px] border-r-[#3d734c]" : "bg-[#e6e6e6] text-[#333] border-b-[#b3b3b3] border-r-[#b3b3b3]")}>
        {n}
      </div>
      {cells}
    </div>
  );
}

function ColumnHeader() {
  return (
    <div className="flex h-[35px] shrink-0 bg-[#e6e6e6] text-[24px] text-[#333]">
      <div className="w-[51px] shrink-0 border-b-[3px] border-[#aaa] border-r-2 border-r-[#d0d0d0]">
        <div className="w-0 h-0 ml-[21px] mt-[5px] border-l-[26px] border-l-transparent border-b-[25px] border-b-[#b5b5b5]" />
      </div>
      {COLS.map(([c, w]) =>
        c === "H" ? (
          <div key={c} className={w + " text-center bg-[#d2d2d2] text-[#3d734c] border-b-[4px] border-[#3d734c] leading-[35px]"}>{c}</div>
        ) : (
          <div key={c} className={w + " text-center border-b-[3px] border-[#aaa] border-r-2 border-r-[#cfcfcf] leading-[35px] shrink-0"}>{c === "J" ? "" : c}</div>
        )
      )}
    </div>
  );
}

const Tri = ({ cls }: { cls: string }) => <div className={"w-0 h-0 " + cls} />;

function SheetTabs() {
  return (
    <div className="h-[42px] flex shrink-0 border-t-[2px] border-[#aaa] bg-[#e6e6e6] overflow-hidden">
      <div className="w-[175px] shrink-0 border-r-2 border-[#aaa] flex items-center pl-[42px] gap-[46px]">
        <Tri cls="border-y-[10px] border-y-transparent border-r-[8px] border-r-[#c8c8c8]" />
        <Tri cls="border-y-[10px] border-y-transparent border-l-[8px] border-l-[#c8c8c8]" />
      </div>
      <div className="w-[134px] -mt-[2px] bg-white shrink-0 flex items-center justify-center text-[32px] font-bold tracking-[-0.03em] text-[#3d734c]">Sheet1</div>
      <div className="w-[197px] shrink-0 border-l-2 border-r-2 border-[#aaa] flex items-center justify-center text-[32px] tracking-[-0.03em] text-[#444]">data_cache</div>
      <div className="w-[37px] h-[37px] ml-[60px] mt-[7px] shrink-0 rounded-full border-[2px] border-[#888] flex items-center justify-center">
        <svg viewBox="0 0 18 18" className="w-[18px] h-[18px]"><path d="M9 0v18M0 9h18" stroke="#777" strokeWidth="4" /></svg>
      </div>
      <div className="ml-[858px] w-[5px] h-[30px] mt-[8px] flex flex-col justify-between shrink-0">
        <div className="h-[6px] bg-[#b5b5b5]" /><div className="h-[6px] bg-[#b5b5b5]" /><div className="h-[6px] bg-[#b5b5b5]" />
      </div>
      <div className="ml-[27px] w-[37px] mt-[6px] bg-white border-2 border-[#aaa] flex items-center justify-center shrink-0">
        <Tri cls="border-y-[10px] border-y-transparent border-r-[9px] border-r-[#666]" />
      </div>
      <div className="ml-[3px] w-[515px] mt-[6px] bg-white border-2 border-[#aaa] border-t-[3px] shrink-0" />
      <div className="w-[314px] mt-[6px] bg-[#d8d8d8] shrink-0" />
      <div className="w-[37px] mt-[6px] bg-white border-2 border-[#aaa] flex items-center justify-center shrink-0">
        <Tri cls="border-y-[10px] border-y-transparent border-l-[9px] border-l-[#666]" />
      </div>
    </div>
  );
}

function VScroll() {
  return (
    <div className="w-[48px] shrink-0 h-full flex flex-col pl-[4px] pr-[5px] pt-px pb-[43px] bg-[#e6e6e6] border-l-2 border-[#aaa]">
      <div className="h-[37px] bg-white border-2 border-[#b5b5b5] flex items-center justify-center shrink-0">
        <Tri cls="border-x-[9px] border-x-transparent border-b-[10px] border-b-[#777]" />
      </div>
      <div className="h-[3px] shrink-0" />
      <div className="flex-1 bg-white border-x-2 border-t-[3px] border-b-2 border-[#b5b5b5]" />
      <div className="h-[40px] bg-[#d8d8d8] shrink-0" />
      <div className="h-[39px] bg-white border-2 border-[#b5b5b5] flex items-center justify-center shrink-0">
        <Tri cls="border-x-[9px] border-x-transparent border-t-[10px] border-t-[#777]" />
      </div>
    </div>
  );
}

/* ---------- task pane ---------- */
const ListIc = () => (
  <svg viewBox="0 0 24 20" className="w-[24px] h-[20px]">
    <path d="M0 2h3M0 7h3M0 12h3M0 17h3" stroke="#444" strokeWidth="2" />
    <path d="M6 2h18M6 7h18M6 12h18M6 17h18" stroke="#444" strokeWidth="2.200" />
  </svg>
);

const ACTIONS: { t: string; ic: React.ReactNode }[] = [
  { t: "Nuevo", ic: <path d="M18 1v28M4 15h28" stroke="#111" strokeWidth="4" fill="none" /> },
  { t: "Actualizar", ic: <><path d="M18 5A12 12 0 1 0 30 17" fill="none" stroke="#111" strokeWidth="4" /><path d="M18-2l8 7-8 6z" fill="#111" /></> },
  { t: "Publicar", ic: <><path d="M12 1h14l8 8v21H12z" fill="none" stroke="#111" strokeWidth="3" /><path d="M26 1v8h8" fill="none" stroke="#111" strokeWidth="2.200" /><path d="M0 8h10M3 15h7M6 22h4" stroke="#111" strokeWidth="3" /></> },
  { t: "Filtrar", ic: <path d="M3 4h30L20 19v13h-4V19z" fill="#111" /> },
  { t: "Diseño", ic: <><path d="M6-4v23l20 6zM10 6v9l10 4z" fill="#111" fillRule="evenodd" /><path d="M8 24h28v7H8z" fill="#eee" stroke="#111" strokeWidth="2" /><path d="M13 24v4M18 24v4M23 24v4M28 24v4M33 24v4" stroke="#111" strokeWidth="1.500" /></> },
];

function Pane() {
  return (
    <div className="flex-1 h-full bg-[#e6e6e6] flex flex-col pl-[21px] pr-[19px] pb-[21px] border-l-2 border-[#cfcfcf]">
      <div className="h-[104px] shrink-0 flex items-center pb-[11px]">
        <span className="w-[663px] text-[51.5px] font-light tracking-[-0.015em] text-[#1f5a35] whitespace-nowrap">Microsoft Dynamics Office ...</span>
        <Tri cls="border-x-[8px] border-x-transparent border-t-[10px] border-t-[#777]" />
        <svg viewBox="0 0 18 18" className="w-[18px] h-[18px] ml-[81px]"><path d="M2 1l14 16M16 1 2 17" stroke="#666" strokeWidth="4" /></svg>
      </div>
      <div className="flex-1 bg-white border-2 border-[#c6c6c6] flex flex-col min-h-0">
        <div className="h-[68px] bg-[#3d734c] -mt-px shrink-0 flex items-center pl-[25px] text-white">
          <span className="w-[480px] text-[33px] font-semibold tracking-[-0.02em] whitespace-nowrap">Conector de datos</span>
          <svg viewBox="0 0 26 26" className="w-[26px] h-[26px] ml-[-26px]">
            <circle cx="13" cy="13" r="7.500" fill="none" stroke="#fff" strokeWidth="5" />
            <path d="M13 0v5M13 21v5M0 13h5M21 13h5M3.800 3.800l3.500 3.500M18.700 18.700l3.500 3.500M22.200 3.800l-3.500 3.500M7.300 18.700l-3.500 3.500" stroke="#fff" strokeWidth="4.500" />
          </svg>
          <span className="ml-[35px] w-[216px] text-[29px] tracking-[-0.03em] whitespace-nowrap">David Maqueda</span>
          <Tri cls="border-x-[7px] border-x-transparent border-t-[8px] border-t-white" />
        </div>
        <div className="pt-[27px] pl-[30px] text-[28.5px] tracking-[-0.025em] text-[#444] shrink-0">
          <div className="flex items-center h-[38px]"><ListIc /><span className="ml-[30px] leading-[38px]">Origen: Líneas de diario</span></div>
          <div className="flex items-center h-[38px]"><ListIc /><span className="ml-[30px] leading-[38px]">Campo: Débito</span></div>
        </div>
        <div className="h-[2px] bg-[#ececec] mx-[24px] mt-[14px] shrink-0" />
        <div className="flex-1" />
        <div className="h-[2px] bg-[#ececec] mx-[24px] shrink-0" />
        <div className="pt-[14px] pl-[46px] text-[28px] tracking-[-0.025em] text-[#333] shrink-0">
          {ACTIONS.map((a) => (
            <div key={a.t} className="relative flex items-center h-[53px]">
              <svg viewBox="0 -4 36 36" className="w-[36px] h-[36px] overflow-visible">{a.ic}</svg>
              <span className="ml-[24px]">{a.t}</span>
              {a.t === "Diseño" && (
                <div className="absolute -left-[37px] top-[1px] w-[265px] h-[68px] border-[5px] border-[#f28c38] rounded-[2px]" />
              )}
            </div>
          ))}
        </div>
        <div className="h-[2px] bg-[#ececec] mx-[24px] mt-[34px] shrink-0" />
        <div className="flex-1 flex justify-end pr-[44px] pt-[29px] max-h-[83px]">
          <svg viewBox="0 0 17 24" className="w-[17px] h-[24px]">
            <path d="M1 0v24" stroke="#111" strokeWidth="1.500" />
            <path d="M2 1l14 7-14 7z" fill="#111" />
          </svg>
        </div>
      </div>
    </div>
  );
}

export default function App() {
  return (
    <div className="w-[3290px] h-[2040px] bg-white pl-[2px] pt-px pr-[4px] pb-[5px] overflow-hidden font-['Open_Sans',sans-serif]">
      <div className="w-[3284px] h-[2034px] flex flex-col bg-[#e6e6e6]">
        <TitleBar />
        <Ribbon />
        <FormulaBar />
        <div className="flex-1 flex min-h-0">
          <div className="w-[2398px] h-full flex flex-col shrink-0">
            <ColumnHeader />
            <div className="flex-1 min-h-0 overflow-hidden bg-white font-['Lato',sans-serif]">
              {Array.from({ length: 39 }, (_, i) => (
                <Row key={i} n={i + 1} />
              ))}
            </div>
            <SheetTabs />
          </div>
          <VScroll />
          <Pane />
        </div>
      </div>
    </div>
  );
}
